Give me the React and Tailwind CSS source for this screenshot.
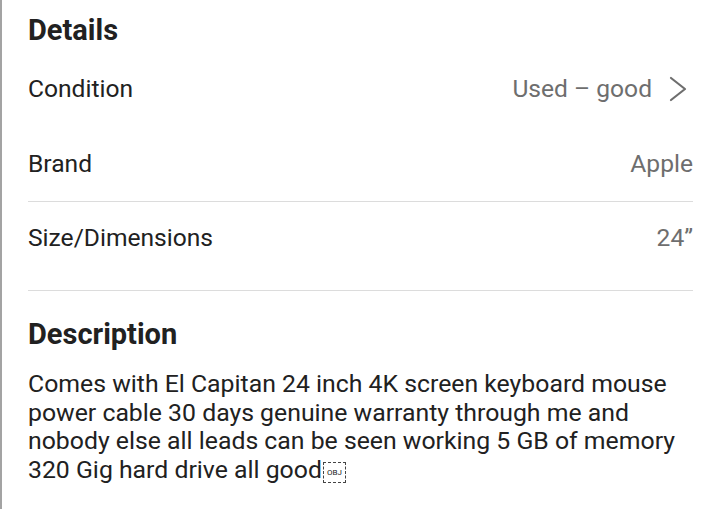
import React from 'react';

const rows = [
  { label: 'Condition', value: 'Used – good', link: true },
  { label: 'Brand', value: 'Apple' },
  { label: 'Size/Dimensions', value: '24”' },
];

const Chevron = () => (
  <svg width="20" height="26" viewBox="0 0 20 26" className="ml-[16px] mr-[5px]">
    <polyline points="3,2 17,13 3,24" fill="none" stroke="#6e6e6e" strokeWidth="2.2" strokeLinecap="round" strokeLinejoin="round" />
  </svg>
);

const ObjMark = () => (
  <span className="inline-block overflow-hidden align-[-5px] ml-[1px] w-[23px] h-[21px] border border-dashed border-[#444] text-center text-[8px] leading-[19px] text-[#222]">
    OBJ
  </span>
);

export default function App() {
  return (
    <div
      className="w-[720px] h-[509px] bg-white border-l-2 border-[#a3a3a3] overflow-hidden text-[#212121]"
      style={{ fontFamily: 'Roboto, "Liberation Sans", sans-serif' }}
    >
      <div className="pl-[26px] pr-[27px]">
        {/* Details */}
        <h2 className="pt-[14px] mb-[6px] text-[29px] leading-[32px] font-bold">Details</h2>

        <div className="h-[75px] flex items-center justify-between text-[24.6px]">
          <span>{rows[0].label}</span>
          <span className="flex items-center text-[#6e6e6e]">
            {rows[0].value}
            <Chevron />
          </span>
        </div>

        <div className="h-[75px] flex items-center justify-between text-[24.6px] border-b border-[#dcdcdc]">
          <span>{rows[1].label}</span>
          <span className="text-[#6e6e6e]">{rows[1].value}</span>
        </div>

        <div className="h-[89px] pt-[22px] flex items-start justify-between text-[24.6px] leading-[28px] border-b border-[#dcdcdc]">
          <span>{rows[2].label}</span>
          <span className="text-[#6e6e6e]">{rows[2].value}</span>
        </div>

        {/* Description */}
        <h2 className="mt-[27px] text-[29px] leading-[32px] font-bold">Description</h2>
        <p className="mt-[20px] text-[24.8px] leading-[28.5px]">
          Comes with El Capitan 24 inch 4K screen keyboard mouse power cable 30 days genuine warranty through me and nobody else all leads can be seen working 5 GB of memory 320 Gig hard drive all good
          <ObjMark />
        </p>
      </div>
    </div>
  );
}
